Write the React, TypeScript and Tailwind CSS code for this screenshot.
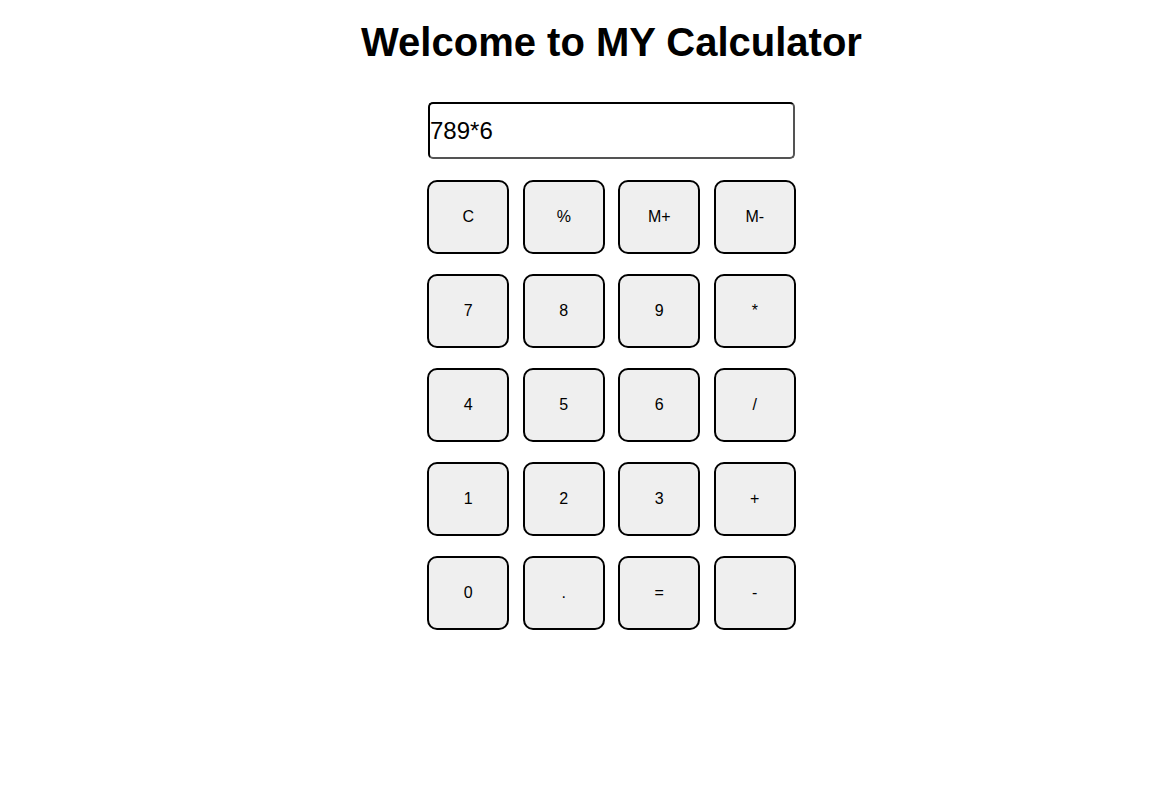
import React from "react";

const keys = ["C", "%", "M+", "M-", "7", "8", "9", "*", "4", "5", "6", "/", "1", "2", "3", "+", "0", ".", "=", "-"];

export default function App() {
  return (
    <div className="min-h-[794px] bg-white pl-[68px] font-['Liberation_Sans',Arial,sans-serif] text-black">
      <div className="flex flex-col items-center">
        <h1 className="mt-[19px] text-[40px] font-bold leading-[46px]">Welcome to MY Calculator</h1>
        <input
          readOnly
          value="789*6"
          className="mt-[37px] h-[57px] w-[367px] rounded-[5px] border-2 border-black bg-white px-0 text-[24px] text-black outline-none [border-style:inset]"
        />
        <div className="mt-[21px] grid grid-cols-[repeat(4,82px)] gap-x-[13.5px] gap-y-[20px]">
          {keys.map((k) => (
            <button
              key={k}
              className="h-[74px] rounded-[10px] border-2 border-black bg-[#efefef] text-[16px] text-black"
            >
              {k}
            </button>
          ))}
        </div>
      </div>
    </div>
  );
}
